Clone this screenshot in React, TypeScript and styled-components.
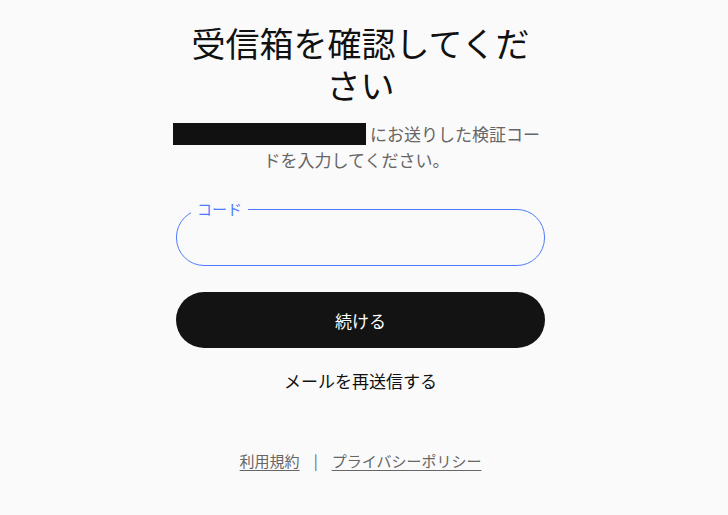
import React from "react";
import styled, { createGlobalStyle } from "styled-components";

const Global = createGlobalStyle`
  html, body { margin: 0; padding: 0; background: #fafafa; }
  body { font-family: "Noto Sans CJK JP", "Noto Sans", sans-serif; color: #111; }
`;

const Page = styled.main`
  display: flex;
  justify-content: center;
  padding: 22px 7px 0 0;
`;

const Column = styled.div`
  width: 369px;
  display: flex;
  flex-direction: column;
  align-items: stretch;
`;

const Title = styled.h1`
  margin: 0;
  font-size: 34px;
  font-weight: 400;
  line-height: 42px;
  text-align: center;
  color: #111;
`;

const Subtitle = styled.p`
  margin: 15px 0 0 -8px;
  font-size: 17px;
  line-height: 26px;
  color: #666;
  text-align: center;
`;

const Redacted = styled.span`
  display: inline-block;
  width: 193px;
  height: 22px;
  background: #111;
  vertical-align: -4px;
  margin-right: 4px;
`;

const Field = styled.fieldset`
  margin: 28px 0 0;
  padding: 0 14px;
  height: 65px;
  box-sizing: border-box;
  border: 1.6px solid #4d7cfe;
  border-radius: 28px;
  display: flex;
  align-items: center;
`;

const Legend = styled.legend`
  padding: 0 6px;
  margin-left: 0;
  font-size: 15px;
  line-height: 16px;
  color: #4d7cfe;
`;

const Input = styled.input`
  flex: 1;
  border: none;
  outline: none;
  background: transparent;
  font-size: 17px;
  font-family: inherit;
  margin-top: -8px;
`;

const Primary = styled.button`
  margin-top: 26px;
  height: 56px;
  border: none;
  border-radius: 28px;
  background: #131313;
  color: #fff;
  font-family: inherit;
  font-size: 17px;
  cursor: pointer;
`;

const LinkButton = styled.button`
  margin-top: 18px;
  border: none;
  background: none;
  font-family: inherit;
  font-size: 17px;
  line-height: 28px;
  color: #111;
  cursor: pointer;
`;

const Footer = styled.footer`
  margin-top: 54px;
  display: flex;
  justify-content: center;
  align-items: center;
  gap: 14px;
  font-size: 15px;
  color: #666;
`;

const FooterLink = styled.a`
  color: #666;
  text-decoration: underline;
  text-underline-offset: 3px;
`;

export default function App() {
  return (
    <>
      <Global />
      <Page>
        <Column>
          <Title>受信箱を確認してください</Title>
          <Subtitle>
            <Redacted />
            にお送りした検証コードを入力してください。
          </Subtitle>
          <Field>
            <Legend>コード</Legend>
            <Input type="text" />
          </Field>
          <Primary>続ける</Primary>
          <LinkButton>メールを再送信する</LinkButton>
          <Footer>
            <FooterLink href="#">利用規約</FooterLink>
            <span>|</span>
            <FooterLink href="#">プライバシーポリシー</FooterLink>
          </Footer>
        </Column>
      </Page>
    </>
  );
}
